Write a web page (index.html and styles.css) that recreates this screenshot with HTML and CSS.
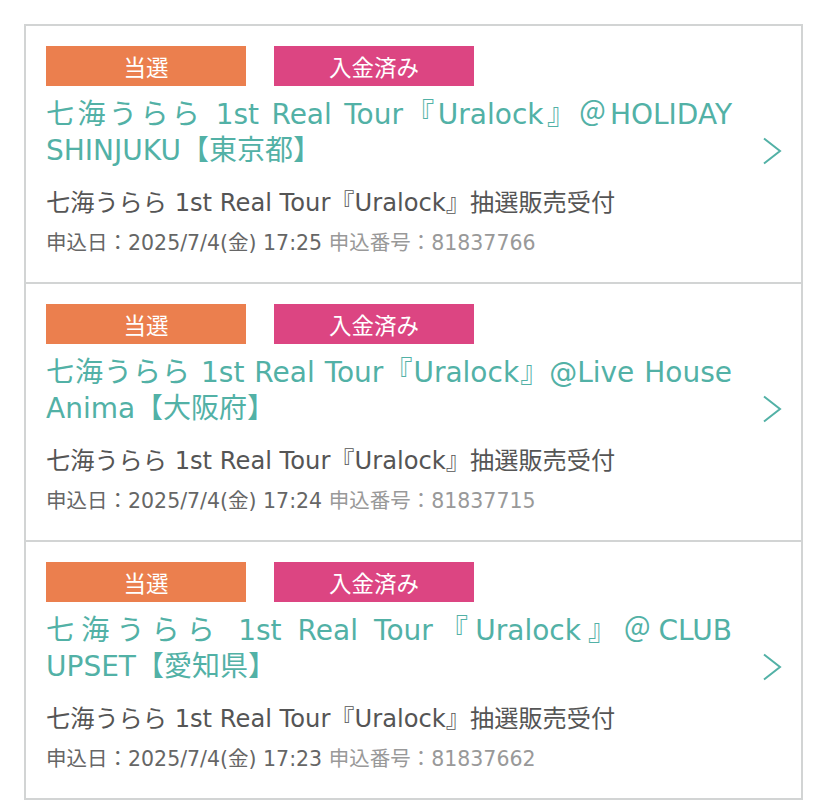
FILE: index.html
```html
<!DOCTYPE html>
<html lang="ja">
<head>
<meta charset="utf-8">
<title>申込履歴</title>
<link rel="stylesheet" href="styles.css">
</head>
<body>
<ul class="list">
  <li class="item">
    <a class="item-link" href="#">
      <div class="item-body">
        <div class="badges"><span class="badge badge-win">当選</span><span class="badge badge-paid">入金済み</span></div>
        <p class="title">七海うらら 1st Real Tour『Uralock』＠HOLIDAY SHINJUKU【東京都】</p>
        <p class="sub">七海うらら 1st Real Tour『Uralock』抽選販売受付</p>
        <p class="meta"><span class="date">申込日：2025/7/4(金) 17:25</span> <span class="no">申込番号：81837766</span></p>
      </div>
      <svg class="chev" viewBox="0 0 20 28" width="20" height="28"><path d="M2 1.5 L18 14 L2 26.5" fill="none" stroke="currentColor" stroke-width="2"/></svg>
    </a>
  </li>
  <li class="item">
    <a class="item-link" href="#">
      <div class="item-body">
        <div class="badges"><span class="badge badge-win">当選</span><span class="badge badge-paid">入金済み</span></div>
        <p class="title">七海うらら 1st Real Tour『Uralock』@Live House Anima【大阪府】</p>
        <p class="sub">七海うらら 1st Real Tour『Uralock』抽選販売受付</p>
        <p class="meta"><span class="date">申込日：2025/7/4(金) 17:24</span> <span class="no">申込番号：81837715</span></p>
      </div>
      <svg class="chev" viewBox="0 0 20 28" width="20" height="28"><path d="M2 1.5 L18 14 L2 26.5" fill="none" stroke="currentColor" stroke-width="2"/></svg>
    </a>
  </li>
  <li class="item">
    <a class="item-link" href="#">
      <div class="item-body">
        <div class="badges"><span class="badge badge-win">当選</span><span class="badge badge-paid">入金済み</span></div>
        <p class="title">七海うらら 1st Real Tour『Uralock』＠CLUB UPSET【愛知県】</p>
        <p class="sub">七海うらら 1st Real Tour『Uralock』抽選販売受付</p>
        <p class="meta"><span class="date">申込日：2025/7/4(金) 17:23</span> <span class="no">申込番号：81837662</span></p>
      </div>
      <svg class="chev" viewBox="0 0 20 28" width="20" height="28"><path d="M2 1.5 L18 14 L2 26.5" fill="none" stroke="currentColor" stroke-width="2"/></svg>
    </a>
  </li>
</ul>
</body>
</html>
```
FILE: styles.css
```css
html, body {
  margin: 0;
  padding: 0;
  background: #fff;
}
body {
  font-family: "DejaVu Sans", "Noto Sans CJK JP", sans-serif;
  padding: 24px 25px 0 24px;
}
.list {
  list-style: none;
  margin: 0;
  padding: 0;
  border: 2px solid #d2d4d4;
}
.item + .item {
  border-top: 2px solid #d2d4d4;
}
.item-link {
  display: flex;
  align-items: center;
  gap: 30px;
  padding: 20px 19px 26px 20px;
  text-decoration: none;
  color: inherit;
}
.item-body {
  flex: 1;
  min-width: 0;
}
.badges {
  display: flex;
  gap: 28px;
}
.badge {
  width: 200px;
  height: 40px;
  display: flex;
  align-items: center;
  justify-content: center;
  color: #fff;
  font-family: "Noto Sans CJK JP", sans-serif;
  font-size: 22.5px;
}
.badge-win { background: #eb7f4e; }
.badge-paid { background: #dc4582; }
.title {
  margin: 11px 0 0;
  font-size: 28px;
  line-height: 36px;
  color: #52b1a6;
  text-align: justify;
}
.sub {
  margin: 19px 0 0;
  font-size: 24.2px;
  line-height: 30px;
  color: #555;
}
.meta {
  margin: 12px 0 0;
  font-size: 20.5px;
  line-height: 26px;
}
.date { color: #666; }
.no { color: #999; }
.chev {
  flex: none;
  color: #52b1a6;
}
```
